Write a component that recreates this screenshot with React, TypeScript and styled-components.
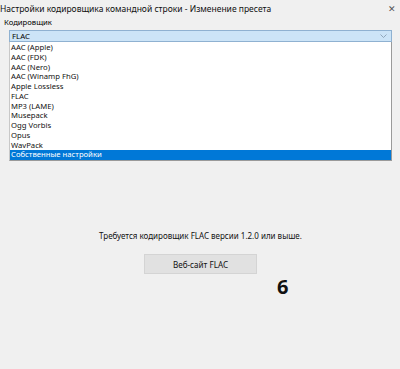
import React from "react";
import styled, { createGlobalStyle } from "styled-components";

const GlobalStyle = createGlobalStyle`
  html, body { margin: 0; padding: 0; background: #f0f0f0; }
  body { font-family: "Noto Sans", "Open Sans", sans-serif; color: #000; }
`;

const Window = styled.div`
  width: 400px;
  height: 369px;
  background: #f0f0f0;
  display: flex;
  flex-direction: column;
  overflow: hidden;
`;

const TitleBar = styled.div`
  height: 16px;
  display: flex;
  align-items: center;
  justify-content: space-between;
  padding: 0 4px 0 0;
`;

const Title = styled.span`
  font-size: 8.5px;
  color: #111;
  white-space: nowrap;
`;

const Close = styled.span`
  font-size: 9px;
  color: #555;
`;

const GroupLabel = styled.div`
  margin: 1px 0 0 4px;
  height: 10px;
  line-height: 10px;
  font-size: 7.7px;
`;

const ComboWrap = styled.div`
  position: relative;
  margin: 3px 8px 0 9px;
`;

const Combo = styled.div`
  height: 12px;
  box-sizing: border-box;
  border: 1px solid #8fb1d1;
  background: #cce4f7;
  display: flex;
  align-items: center;
  justify-content: space-between;
  padding: 0 4px 0 2px;
  font-size: 7.8px;
`;

const DropList = styled.ul`
  position: absolute;
  top: 100%;
  left: 0;
  right: 0;
  height: 119px;
  margin: 0;
  padding: 1px 0 0;
  list-style: none;
  background: #fff;
  box-sizing: border-box;
  border: 1px solid #9a9a9a;
  border-top: none;
  border-left-color: #c8c8c8;
  z-index: 2;
`;

const Item = styled.li<{ $selected?: boolean }>`
  height: 9.75px;
  line-height: 9.75px;
  padding-left: 1px;
  font-size: 7.7px;
  white-space: nowrap;
  background: ${(p) => (p.$selected ? "#0078d7" : "transparent")};
  color: ${(p) => (p.$selected ? "#fff" : "#111")};
`;

const Content = styled.div`
  padding-top: 189px;
  display: flex;
  flex-direction: column;
  align-items: center;
`;

const Message = styled.div`
  height: 10px;
  line-height: 10px;
  font-size: 8px;
  color: #111;
  margin-left: 1px;
`;

const Button = styled.button`
  margin-top: 13px;
  width: 113px;
  height: 20px;
  margin-left: 1px;
  background: #e1e1e1;
  border: 1px solid #d4d4d4;
  font-family: inherit;
  font-size: 8.1px;
  color: #111;
  padding: 0;
`;

const Badge = styled.div`
  align-self: stretch;
  margin: 3px 0 0 277px;
  font-family: "Noto Sans", sans-serif;
  font-weight: bold;
  font-size: 20px;
  line-height: 19px;
  color: #111;
`;

const items = [
  "AAC (Apple)",
  "AAC (FDK)",
  "AAC (Nero)",
  "AAC (Winamp FhG)",
  "Apple Lossless",
  "FLAC",
  "MP3 (LAME)",
  "Musepack",
  "Ogg Vorbis",
  "Opus",
  "WavPack",
  "Собственные настройки",
];

export default function App() {
  return (
    <>
      <GlobalStyle />
      <Window>
        <TitleBar>
          <Title>Настройки кодировщика командной строки - Изменение пресета</Title>
          <Close>✕</Close>
        </TitleBar>
        <GroupLabel>Кодировщик</GroupLabel>
        <ComboWrap>
          <Combo>
            <span>FLAC</span>
            <svg width="7" height="4" viewBox="0 0 7 4">
              <path d="M0.5 0.5 L3.5 3.5 L6.5 0.5" fill="none" stroke="#8a9fb3" strokeWidth="0.9" />
            </svg>
          </Combo>
          <DropList>
            {items.map((it, i) => (
              <Item key={it} $selected={i === items.length - 1}>
                {it}
              </Item>
            ))}
          </DropList>
        </ComboWrap>
        <Content>
          <Message>Требуется кодировщик FLAC версии 1.2.0 или выше.</Message>
          <Button>Веб-сайт FLAC</Button>
          <Badge>6</Badge>
        </Content>
      </Window>
    </>
  );
}
